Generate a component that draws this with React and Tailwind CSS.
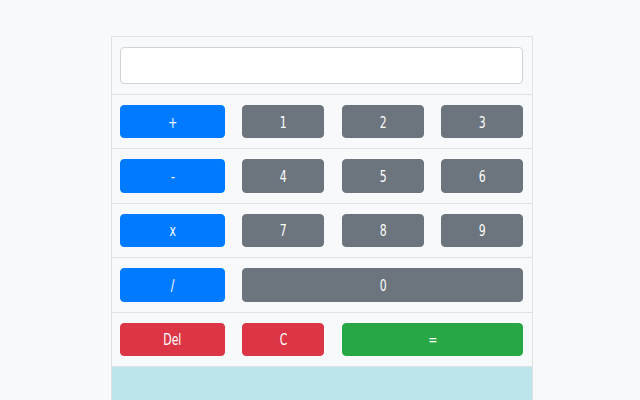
export default function App() {
  const blue = "bg-[#007bff] border-[#007bff]";
  const gray = "bg-[#6c757d] border-[#6c757d]";
  const red = "bg-[#dc3545] border-[#dc3545]";
  const green = "bg-[#28a745] border-[#28a745]";
  const Btn = ({ c, children, cls = "" }) => (
    <button className={`h-[33.4px] rounded-[4px] border text-white text-[16px] leading-none ${c} ${cls}`}>
      <span className="inline-block scale-x-[0.68] translate-y-[1px]">{children}</span>
    </button>
  );
  const row = "grid grid-cols-[105px_82px_82px_82px] justify-between pl-[8px] pr-[9px] py-[10px] border-t border-[#dee2e6]";
  return (
    <div className="w-[640px] h-[400px] overflow-hidden bg-[#f8f9fa]" style={{ fontFamily: '"DejaVu Sans", sans-serif' }}>
      <div className="ml-[111px] mt-[36px] w-[422px] border border-[#dfe2e5] bg-[#f8f9fa]">
        <div className="pl-[8px] pr-[9px] py-[10px]">
          <div className="h-[37px] bg-white border border-[#ced4da] rounded-[4px]"></div>
        </div>
        <div className={row}>
          <Btn c={blue}>+</Btn><Btn c={gray}>1</Btn><Btn c={gray}>2</Btn><Btn c={gray}>3</Btn>
        </div>
        <div className={row}>
          <Btn c={blue}>-</Btn><Btn c={gray}>4</Btn><Btn c={gray}>5</Btn><Btn c={gray}>6</Btn>
        </div>
        <div className={row}>
          <Btn c={blue}>x</Btn><Btn c={gray}>7</Btn><Btn c={gray}>8</Btn><Btn c={gray}>9</Btn>
        </div>
        <div className={row}>
          <Btn c={blue}>/</Btn><Btn c={gray} cls="col-span-3">0</Btn>
        </div>
        <div className={row}>
          <Btn c={red}>Del</Btn><Btn c={red}>C</Btn><Btn c={green} cls="col-span-2">=</Btn>
        </div>
        <div className="h-[60px] bg-[#bee5eb] border-t border-[#dee2e6]"></div>
      </div>
    </div>
  );
}
